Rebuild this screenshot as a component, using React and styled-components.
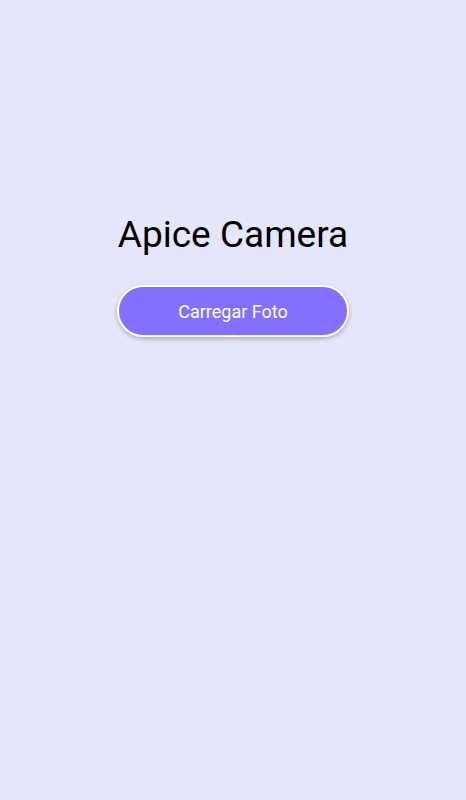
import React from 'react'
import styled, { createGlobalStyle } from 'styled-components'

const GlobalStyle = createGlobalStyle`
	html, body {
		margin: 0;
		padding: 0;
		background-color: #e6e6fa;
		font-family: Roboto, 'Liberation Sans', sans-serif;
	}
`

const Screen = styled.main`
	min-height: 800px;
	display: flex;
	flex-direction: column;
	align-items: center;
	padding-top: 213px;
	box-sizing: border-box;
	background-color: #e6e6fa;
`

const Title = styled.h1`
	margin: 0;
	font-size: 37px;
	font-weight: 400;
	line-height: 44px;
	color: #000;
`

const UploadButton = styled.button`
	margin-top: 28px;
	width: 232px;
	height: 52px;
	border-radius: 26px;
	border: 2px solid #fff;
	background-color: #8470ff;
	color: #fff;
	font-family: Roboto, 'Liberation Sans', sans-serif;
	font-size: 18px;
	box-shadow: 0 2px 4px rgba(0, 0, 0, 0.25);
	cursor: pointer;
`

const App = () => (
	<>
		<GlobalStyle />
		<Screen>
			<Title>Apice Camera</Title>
			<UploadButton>Carregar Foto</UploadButton>
		</Screen>
	</>
)

export default App
